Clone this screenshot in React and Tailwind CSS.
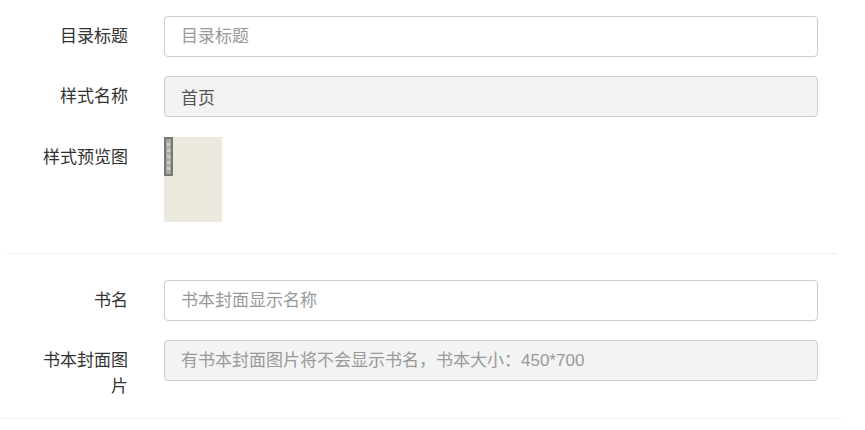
import React from 'react';

const font = { fontFamily: '"Liberation Sans", "Noto Sans CJK SC", sans-serif' };

const Label = ({ children }) => (
  <label className="ml-[38px] w-[90px] shrink-0 pt-2 text-right text-[17px] leading-[26px] text-[#333]">
    {children}
  </label>
);

const Field = ({ placeholder, value, disabled }) => (
  <input
    type="text"
    placeholder={placeholder}
    defaultValue={value}
    disabled={disabled}
    className={`ml-[36px] h-[41px] w-[654px] rounded-[4px] border border-[#ccc] px-4 text-[17px] text-[#555] outline-none placeholder:text-[#999] ${
      disabled ? 'bg-[#f3f3f3]' : 'bg-white'
    }`}
  />
);

export default function App() {
  return (
    <div className="min-h-[430px] w-[865px] bg-white pt-4" style={font}>
      <div className="flex">
        <Label>目录标题</Label>
        <Field placeholder="目录标题" />
      </div>

      <div className="mt-[19px] flex">
        <Label>样式名称</Label>
        <Field value="首页" disabled />
      </div>

      <div className="mt-[20px] flex">
        <Label>样式预览图</Label>
        {/* preview thumbnail */}
        <div className="ml-[36px] h-[85px] w-[58px] bg-[#ebe8dd]">
          <div className="flex h-[39px] w-[9px] flex-col items-center justify-around border-2 border-[#777] bg-[#a9a9a4] py-[2px]">
            <span className="h-[3px] w-[3px] bg-[#ccc]" />
            <span className="h-[3px] w-[3px] bg-[#ccc]" />
            <span className="h-[3px] w-[3px] bg-[#ccc]" />
            <span className="h-[3px] w-[3px] bg-[#ccc]" />
            <span className="h-[3px] w-[3px] bg-[#ccc]" />
          </div>
        </div>
      </div>

      <div className="ml-[7px] mt-[31px] h-px w-[830px] bg-[#eee]" />

      <div className="mt-[26px] flex">
        <Label>书名</Label>
        <Field placeholder="书本封面显示名称" />
      </div>

      <div className="mt-[19px] flex">
        <Label>书本封面图片</Label>
        <Field placeholder="有书本封面图片将不会显示书名，书本大小：450*700" disabled />
      </div>

      <div className="ml-[2px] mt-[18px] h-px w-[840px] bg-[#eee]" />
    </div>
  );
}
